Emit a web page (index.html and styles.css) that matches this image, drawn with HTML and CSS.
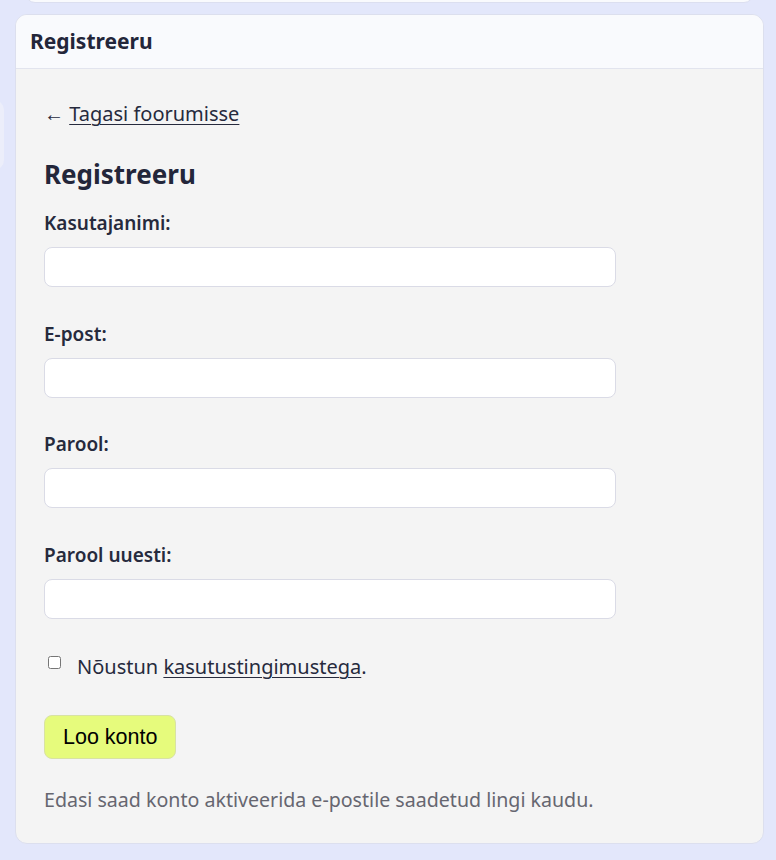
FILE: index.html
```html
<!DOCTYPE html>
<html lang="et">
<head>
<meta charset="utf-8">
<title>Registreeru</title>
<link rel="stylesheet" href="styles.css">
</head>
<body>
<div class="prev-card"></div>
<div class="side-card"></div>
<section class="card">
  <header class="card-head">Registreeru</header>
  <div class="card-body">
    <a class="back" href="#"><span class="arrow">←</span> <span class="u">Tagasi foorumisse</span></a>
    <h2 class="title">Registreeru</h2>
    <form class="form">
      <div class="field">
        <label class="label">Kasutajanimi:</label>
        <input class="input" type="text">
      </div>
      <div class="field">
        <label class="label">E-post:</label>
        <input class="input" type="email">
      </div>
      <div class="field">
        <label class="label">Parool:</label>
        <input class="input" type="password">
      </div>
      <div class="field">
        <label class="label">Parool uuesti:</label>
        <input class="input" type="password">
      </div>
      <div class="agree">
        <input class="check" type="checkbox">
        <span class="agree-text">Nõustun <a href="#" class="u">kasutustingimustega</a>.</span>
      </div>
      <button class="btn" type="button">Loo konto</button>
      <p class="note">Edasi saad konto aktiveerida e-postile saadetud lingi kaudu.</p>
    </form>
  </div>
</section>
</body>
</html>
```
FILE: styles.css
```css
html, body {
  margin: 0;
  padding: 0;
}
body {
  background: #e3e7fb;
  font-family: "Noto Sans", "Open Sans", sans-serif;
  color: #262a3d;
  height: 860px;
  overflow: hidden;
  position: relative;
}
.prev-card {
  position: absolute;
  left: 25px;
  width: 727px;
  top: -20px;
  height: 21px;
  background: #f9fafd;
  border: 1px solid #dcdff0;
  border-radius: 0 0 10px 10px;
}
.side-card {
  position: absolute;
  left: -20px;
  top: 100px;
  width: 24px;
  height: 70px;
  background: #eceefa;
  border-radius: 10px;
}
.card {
  margin: 14px 11px 0 15px;
  width: 749px;
  box-sizing: border-box;
  border: 1px solid #dcdfee;
  border-radius: 12px;
  background: #f4f4f4;
  overflow: hidden;
  position: relative;
}
.card-head {
  background: #f9fafd;
  border-bottom: 1px solid #e2e4ee;
  height: 54px;
  box-sizing: border-box;
  padding: 0 14px 1px;
  display: flex;
  align-items: center;
  font-weight: 700;
  font-size: 21px;
  color: #23263a;
}
.card-body {
  padding: 31px 28px 30px 28px;
}
.back {
  display: block;
  height: 28px;
  font-size: 20px;
  color: #262a3d;
  text-decoration: none;
  line-height: 28px;
}
.u {
  text-decoration: underline;
  text-underline-offset: 3px;
  text-decoration-thickness: 1px;
  color: inherit;
}
.title {
  margin: 29px 0 0 0;
  font-size: 26px;
  line-height: 34px;
  font-weight: 700;
  color: #23263a;
}
.form {
  margin: 0;
}
.field {
  display: flex;
  flex-direction: column;
  margin-top: 19px;
}
.field + .field {
  margin-top: 33.7px;
}
.label {
  font-size: 19px;
  font-weight: 600;
  line-height: 26px;
  margin-bottom: 11px;
}
.input {
  width: 572px;
  height: 40px;
  box-sizing: border-box;
  border: 1px solid #dadbe6;
  border-radius: 8px;
  background: #fff;
  font-size: 16px;
  padding: 0 10px;
}
.agree {
  display: flex;
  align-items: flex-start;
  margin-top: 35px;
}
.check {
  width: 13px;
  height: 13px;
  margin: 2px 16px 0 4px;
}
.agree-text {
  font-size: 20px;
  line-height: 26px;
}
.btn {
  display: block;
  margin-top: 35px;
  height: 44px;
  padding: 0 18px;
  font-family: "Liberation Sans", Arial, sans-serif;
  font-size: 21.5px;
  color: #000;
  background: #e6fb7c;
  border: 1px solid #d8e2a4;
  border-radius: 8px;
}
.note {
  margin: 28px 0 0 0;
  font-size: 19.6px;
  line-height: 26px;
  color: #666670;
}
```
